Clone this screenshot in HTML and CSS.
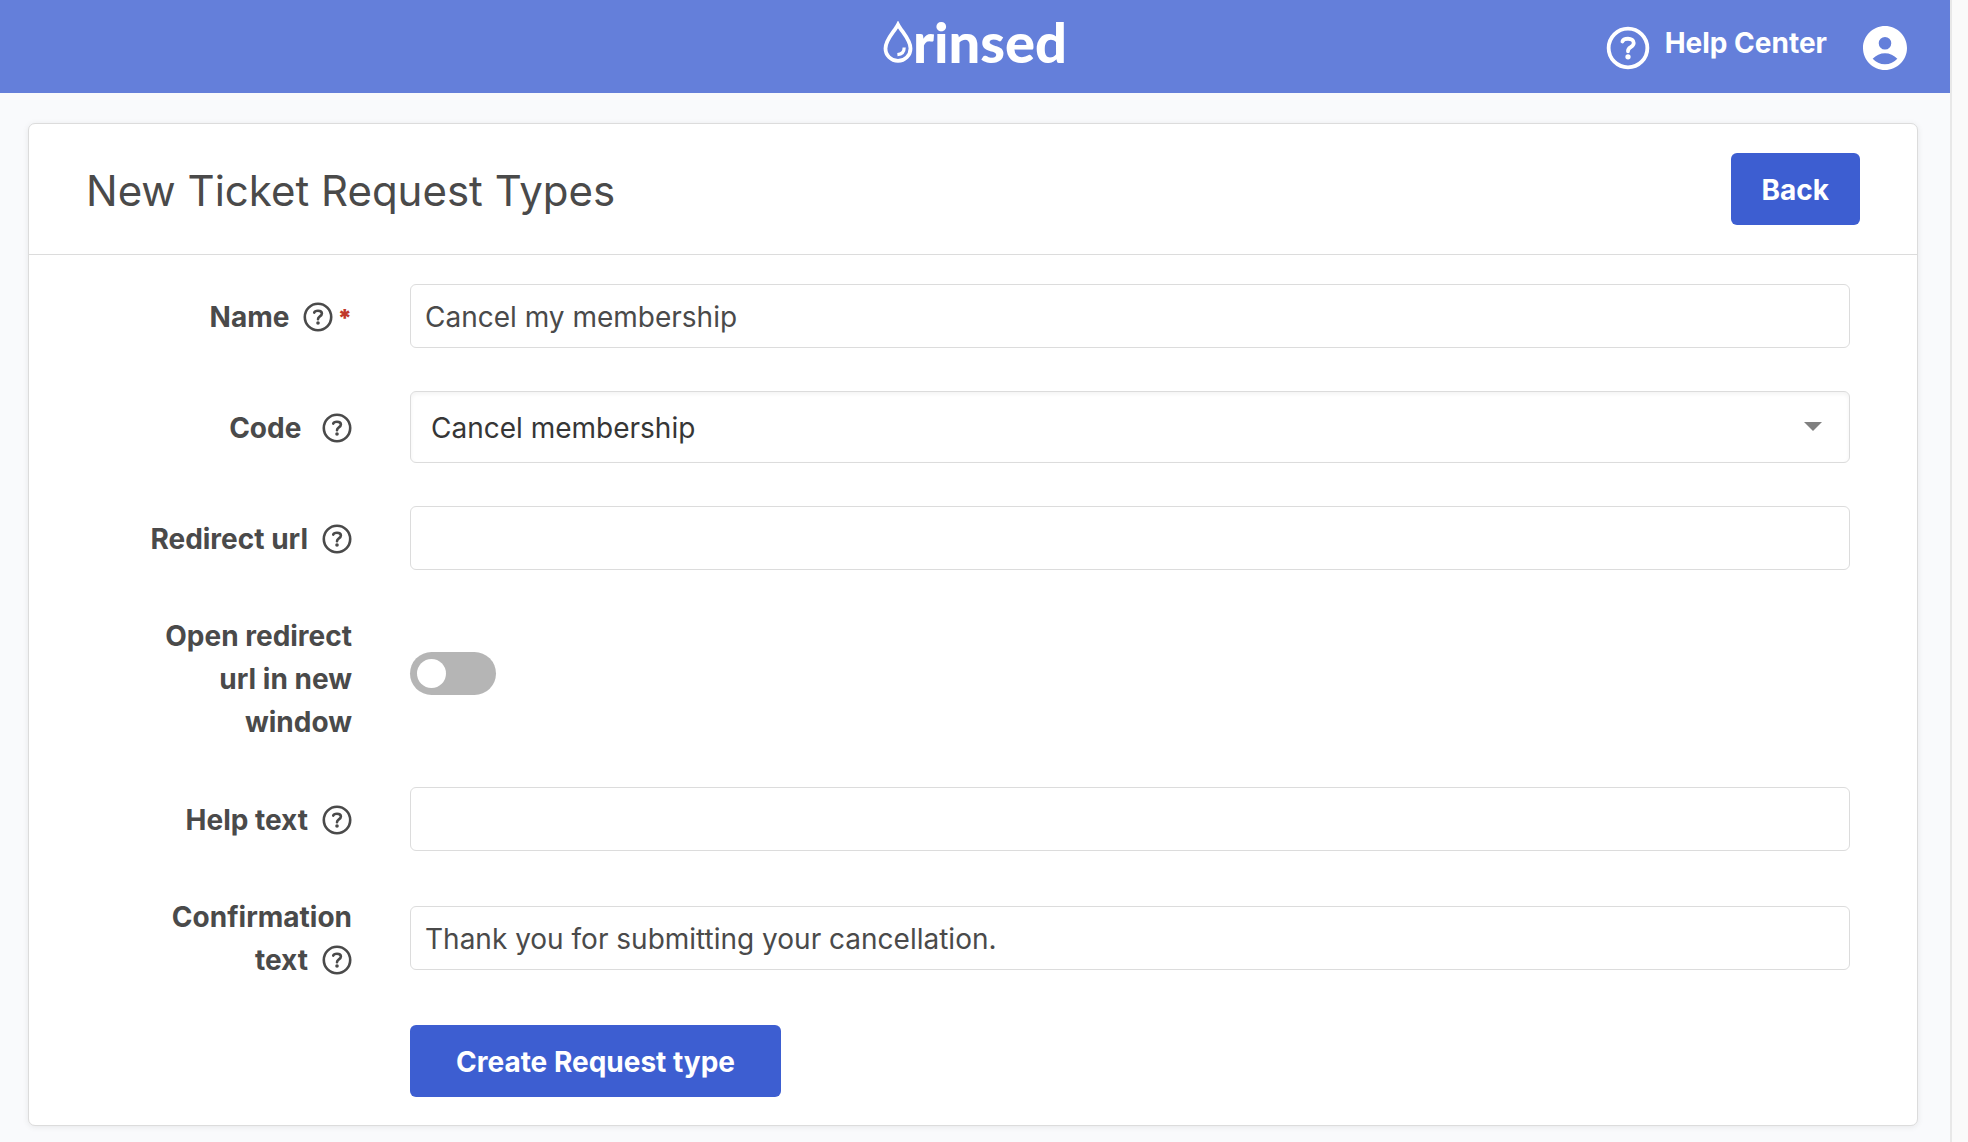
FILE: index.html
```html
<!DOCTYPE html>
<html lang="en">
<head>
<meta charset="utf-8">
<meta name="viewport" content="width=device-width, initial-scale=1">
<title>New Ticket Request Types</title>
<link rel="stylesheet" href="styles.css">
</head>
<body>
<svg class="sprite" aria-hidden="true">
  <symbol id="help" viewBox="0 0 30 30">
    <circle cx="15" cy="15" r="13.2" fill="none" stroke="currentColor" stroke-width="2.6"/>
    <path d="M11.2 10.600C11.600 9.300 12.900 8.700 15 8.700c2.300 0 3.900 1.100 3.900 2.900 0 1.700-1.200 2.300-2.300 3-1.100.7-1.600 1.200-1.600 2.600" fill="none" stroke="currentColor" stroke-width="2.600" stroke-linecap="round"/>
    <circle cx="15" cy="21" r="1.8" fill="currentColor"/>
  </symbol>
</svg>
<div class="page">
  <header class="topbar">
    <a class="logo" href="#" aria-label="rinsed">
      <svg class="drop" viewBox="0 0 30 42" aria-hidden="true">
        <path d="M15 3.6C11.500 10.500 2.500 18.500 2.500 27.400a12.500 12.500 0 0 0 25 0C27.500 18.500 18.500 10.500 15 3.600z" fill="none" stroke="#fff" stroke-width="3.800"/>
        <path d="M21.200 26.500c0 4.200-2.800 6.800-6.800 7.200" fill="none" stroke="#fff" stroke-width="3.200"/>
      </svg>
      <span>rinsed</span>
    </a>
    <nav class="tools">
      <a class="help-link" href="#">
        <svg class="tool-icon" aria-hidden="true"><use href="#help"/></svg>
        <span class="help-text">Help Center</span>
      </a>
      <a class="account" href="#" aria-label="Account">
        <svg class="tool-icon" viewBox="2 2 20 20" aria-hidden="true">
          <path fill="currentColor" d="M12 2C6.480 2 2 6.480 2 12s4.480 10 10 10 10-4.480 10-10S17.520 2 12 2zM12 7a2.850 2.850 0 1 1 0 5.700A2.850 2.850 0 0 1 12 7zM12 19.400c-2.200 0-4.200-.900-5.600-2.500 1.500-1.600 3.500-2.500 5.600-2.500s4.100.900 5.600 2.500c-1.400 1.600-3.400 2.500-5.600 2.500z"/>
        </svg>
      </a>
    </nav>
  </header>
  <main class="card">
    <div class="card-head">
      <h1>New Ticket Request Types</h1>
      <button class="btn back" type="button">Back</button>
    </div>
    <form class="form">
      <label for="name"><span class="nowrap">Name<svg class="hint" aria-hidden="true"><use href="#help"/></svg><span class="required">*</span></span></label>
      <input class="field" id="name" type="text" value="Cancel my membership" required>

      <label for="code"><span class="nowrap">Code <svg class="hint" aria-hidden="true"><use href="#help"/></svg></span></label>
      <div class="select">
        <select id="code"><option>Cancel membership</option></select>
      </div>

      <label for="url"><span class="nowrap">Redirect url<svg class="hint" aria-hidden="true"><use href="#help"/></svg></span></label>
      <input class="field" id="url" type="text">

      <label for="window">Open redirect url in new window</label>
      <input class="toggle" id="window" type="checkbox" role="switch">

      <label for="help-field">Help <span class="nowrap">text<svg class="hint" aria-hidden="true"><use href="#help"/></svg></span></label>
      <input class="field" id="help-field" type="text">

      <label for="confirmation">Confirmation <span class="nowrap">text<svg class="hint" aria-hidden="true"><use href="#help"/></svg></span></label>
      <input class="field" id="confirmation" type="text" value="Thank you for submitting your cancellation.">

      <button class="btn submit" type="submit">Create Request type</button>
    </form>
  </main>
</div>
</body>
</html>
```

FILE: styles.css
```css
* {
  box-sizing: border-box;
}

body {
  margin: 0;
  background: #fafafa;
  color: #4a4a4a;
  font: 28px/43px Inter, "Liberation Sans", sans-serif;
}

.sprite {
  display: none;
}

.page {
  min-height: 100vh;
  margin-right: 16px;
  padding-bottom: 18px;
  border-right: 2px solid #e8e8e8;
  background: #f9fafc;
}

a {
  color: #fff;
  text-decoration: none;
}

.topbar {
  display: grid;
  grid-template-columns: 1fr auto 1fr;
  align-items: center;
  height: 93px;
  padding: 2px 43px 0;
  background: #647fda;
}

.logo {
  grid-column: 2;
  display: flex;
  align-items: center;
  padding-bottom: 12px;
  font: 900 56px/60px Lato, sans-serif;
}

.drop {
  width: 30px;
  height: 42px;
}

.tools {
  display: flex;
  justify-content: flex-end;
  gap: 36px;
}

.help-link {
  display: flex;
  gap: 15px;
  font-weight: 700;
}

.help-text {
  margin-top: -4px;
}

.tool-icon {
  display: block;
  width: 44px;
  height: 44px;
}

.card {
  margin: 30px 32px 0 28px;
  border: 1px solid #dcdcdc;
  border-radius: 7px;
  background: #fff;
  box-shadow: 0 1px 6px rgba(0, 0, 0, 0.08);
}

.card-head {
  display: flex;
  align-items: center;
  justify-content: space-between;
  padding: 29px 57px;
  border-bottom: 1px solid #dcdcdc;
}

h1 {
  margin: 0;
  padding-top: 4px;
  font-size: 42px;
  font-weight: 400;
  line-height: 60px;
}

.btn {
  height: 72px;
  padding-top: 2px;
  border: 0;
  border-radius: 6px;
  background: #3d5ed1;
  color: #fff;
  font: inherit;
  font-weight: 700;
}

.back {
  padding: 2px 31px 0;
}

.form {
  display: grid;
  grid-template-columns: 213px 1fr;
  align-items: center;
  gap: 43px 58px;
  padding: 29px 67px 28px 110px;
}

label {
  padding-top: 2px;
  font-weight: 700;
  text-align: right;
}

.nowrap {
  white-space: nowrap;
}

.hint {
  width: 30px;
  height: 30px;
  margin-left: 14px;
  vertical-align: -5px;
}

.required {
  margin-left: 4px;
  color: #c0392b;
  font-size: 24px;
  font-weight: 900;
  line-height: 1;
}

.field,
select {
  display: block;
  width: 100%;
  height: 64px;
  padding: 2px 14px 0;
  border: 1px solid #dcdcdc;
  border-radius: 6px;
  background: #fff;
  color: #4a4a4a;
  font: inherit;
}

.select {
  position: relative;
}

.select::after {
  content: "";
  position: absolute;
  top: 31px;
  right: 28px;
  border: 9px solid transparent;
  border-top-color: #808080;
  border-bottom: 0;
  pointer-events: none;
}

select {
  appearance: none;
  height: 72px;
  padding: 2px 20px 0;
  color: #363636;
  box-shadow: inset 0 2px 4px rgba(0, 0, 0, 0.05);
}

.toggle {
  appearance: none;
  display: flex;
  align-items: center;
  width: 86px;
  height: 43px;
  margin: 0 0 10px;
  padding: 0 7px;
  border-radius: 22px;
  background: #b5b5b5;
}

.toggle::before {
  content: "";
  width: 29px;
  height: 29px;
  border-radius: 50%;
  background: #fff;
}

.toggle:checked {
  justify-content: flex-end;
  background: #3d5ed1;
}

.submit {
  grid-column: 2;
  justify-self: start;
  padding: 2px 46px 0;
}
```
